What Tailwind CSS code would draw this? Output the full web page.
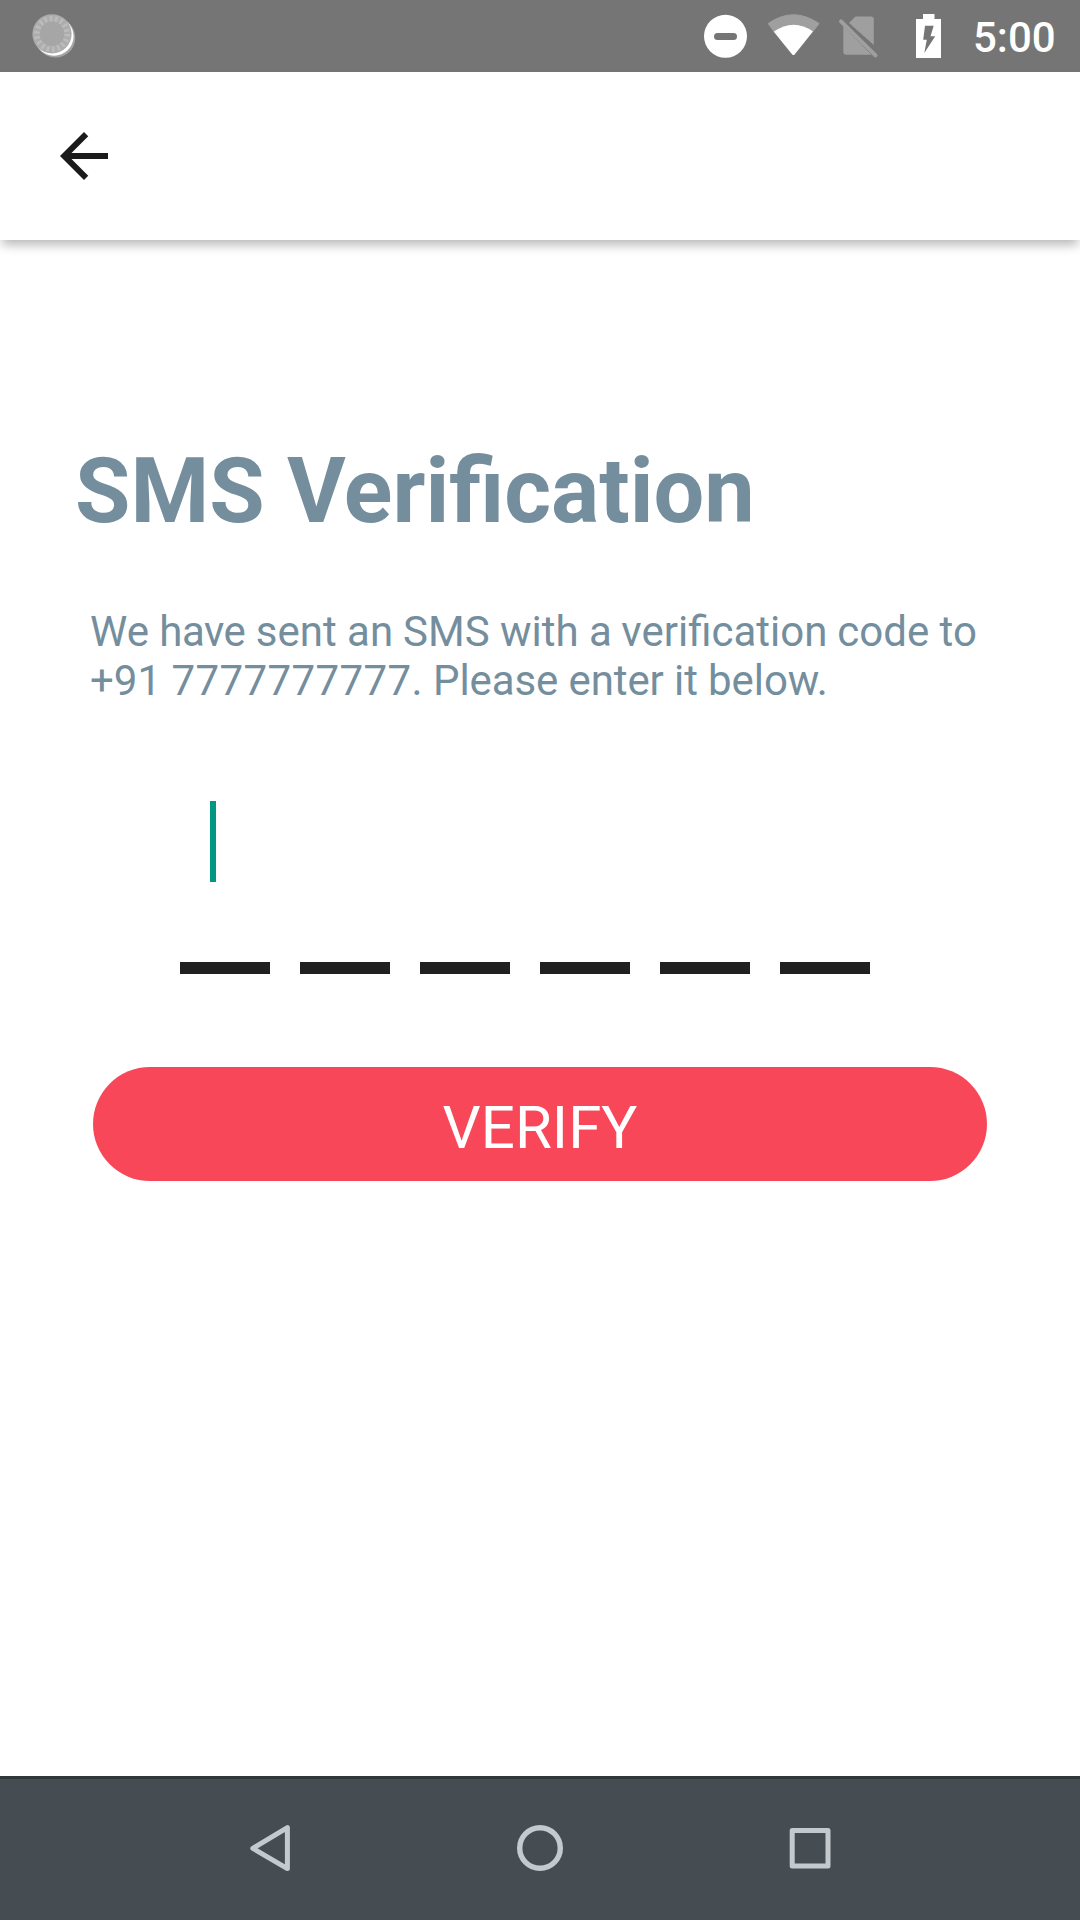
<!DOCTYPE html>
<html lang="en">
<head>
    <meta charset="UTF-8">
    <meta name="viewport" content="width=device-width, initial-scale=1.0">
    <title>SMS Verification</title>
    <script src="https://cdn.jsdelivr.net/npm/@tailwindcss/browser@4"></script>
</head>
<body class="bg-white w-[1080px] h-[1920px] flex flex-col overflow-hidden font-['Roboto',sans-serif]">
    <!-- Status bar -->
    <div class="h-[72px] shrink-0 bg-[#757575] flex items-center justify-between">
        <svg class="ml-6 w-14 h-[72px]" viewBox="24 0 56 72">
            <circle cx="55.5" cy="37.8" r="19.8" fill="#a4a4a4" />
            <circle cx="54" cy="36.2" r="19.6" fill="#ffffff" />
            <circle cx="52" cy="33.9" r="19.6" fill="#adadad" />
            <circle cx="52" cy="33.9" r="15" fill="none" stroke="#bcbcbc" stroke-width="6" stroke-dasharray="2.4 2.836" />
            <circle cx="52" cy="33.9" r="12.3" fill="#a6a6a6" />
        </svg>
        <div class="flex items-center">
            <svg class="w-[270px] h-[72px]" viewBox="700 0 270 72">
                <!-- Do not disturb -->
                <circle cx="725.5" cy="36.3" r="21.5" fill="#fff" />
                <rect x="714" y="33" width="23" height="7" rx="3.5" fill="#757575" />
                <!-- Wifi -->
                <path d="M768.2 23.5 Q793.3 6 819 23.5 L813 31.5 L774.3 32 Z" fill="#9f9f9f" stroke="#9f9f9f" stroke-width="1" stroke-linejoin="round" />
                <path d="M773.8 31.8 Q793.5 18 813 31.5 L794.6 54.4 Q793.4 55.6 792.2 54.4 Z" fill="#fff" />
                <!-- No sim -->
                <path d="M849 23 L855.5 16.5 H871 Q873.8 16.5 873.8 19.3 V45 Z" fill="#9f9f9f" />
                <path d="M843.3 26 L871.5 54.8 H846.3 Q843.3 54.8 843.3 51.8 Z" fill="#9f9f9f" />
                <path d="M841 21.3 L875.5 55.3" stroke="#9f9f9f" stroke-width="4" stroke-linecap="round" />
                <!-- Battery -->
                <path d="M923 14 H934.5 V19 H941 V58 H916 V19 H923 Z" fill="#fff" />
                <path d="M925 25.7 H933.7 L930.5 36.2 H935.2 L924.3 53 L926.8 39.7 H923.2 Z" fill="#757575" />
            </svg>
            <span class="w-[110px] pl-[3px] pt-[2px] text-[42px] leading-[49px] font-medium text-white">5:00</span>
        </div>
    </div>

    <!-- App bar -->
    <header class="h-[168px] shrink-0 bg-white flex items-center pl-12 shadow-[0_7px_10px_-2px_rgba(0,0,0,0.28)]">
        <svg class="w-[72px] h-[72px]" viewBox="0 0 24 24" fill="#1b1b1b">
            <path d="M20 11H7.83l5.59-5.59L12 4l-8 8 8 8 1.41-1.41L7.83 13H20v-2z" />
        </svg>
    </header>

    <!-- Content -->
    <main class="flex-1 pt-[199px]">
        <h1 class="ml-[75px] text-[90px] leading-[105px] font-bold text-[#748e9e]">SMS Verification</h1>
        <p class="ml-[90px] mt-[63px] text-[42px] leading-[49px] text-[#748e9e] whitespace-nowrap">
            We <span class="tracking-[-0.5px]">have</span> sent <span class="mr-[-0.5px]">an</span> SMS with <span class="mr-[-1px]">a</span> <span class="mr-[-0.5px]">verification</span> code to<br>
            +91 <span class="tracking-[0.4px]">7777777777</span>. <span class="tracking-[-0.1px]">Please enter it below.</span>
        </p>

        <!-- Code entry -->
        <div class="ml-[180px] mt-24">
            <div class="ml-[30px] w-1.5 h-[81px] bg-[#009785]"></div>
            <div class="mt-20 flex gap-[30px]">
                <div class="w-[90px] h-3 bg-[#202020]"></div>
                <div class="w-[90px] h-3 bg-[#202020]"></div>
                <div class="w-[90px] h-3 bg-[#202020]"></div>
                <div class="w-[90px] h-3 bg-[#202020]"></div>
                <div class="w-[90px] h-3 bg-[#202020]"></div>
                <div class="w-[90px] h-3 bg-[#202020]"></div>
            </div>
        </div>

        <button type="button" class="block ml-[93px] mt-[93px] w-[894px] h-[114px] pt-[7px] rounded-full bg-[#f74759] text-white text-[60px] leading-[70px]">VERIFY</button>
    </main>

    <!-- Navigation bar -->
    <nav class="h-36 shrink-0 bg-[#464d52] border-t-[3px] border-[#313638] flex items-center justify-center">
        <svg class="w-[270px] h-[141px]" viewBox="135 1779 270 141" fill="none" stroke="#c3c9cc" stroke-width="5" stroke-linejoin="round">
            <path d="M252.8 1848.3 L287.4 1827.6 V1868.6 Z" />
        </svg>
        <svg class="w-[270px] h-[141px]" viewBox="405 1779 270 141" fill="none" stroke="#c3c9cc" stroke-width="5.4">
            <circle cx="540" cy="1848" r="20.3" />
        </svg>
        <svg class="w-[270px] h-[141px]" viewBox="675 1779 270 141" fill="none" stroke="#c3c9cc" stroke-width="5" stroke-linejoin="round">
            <rect x="792.2" y="1830.4" width="35.8" height="35.6" />
        </svg>
    </nav>
</body>
</html>
